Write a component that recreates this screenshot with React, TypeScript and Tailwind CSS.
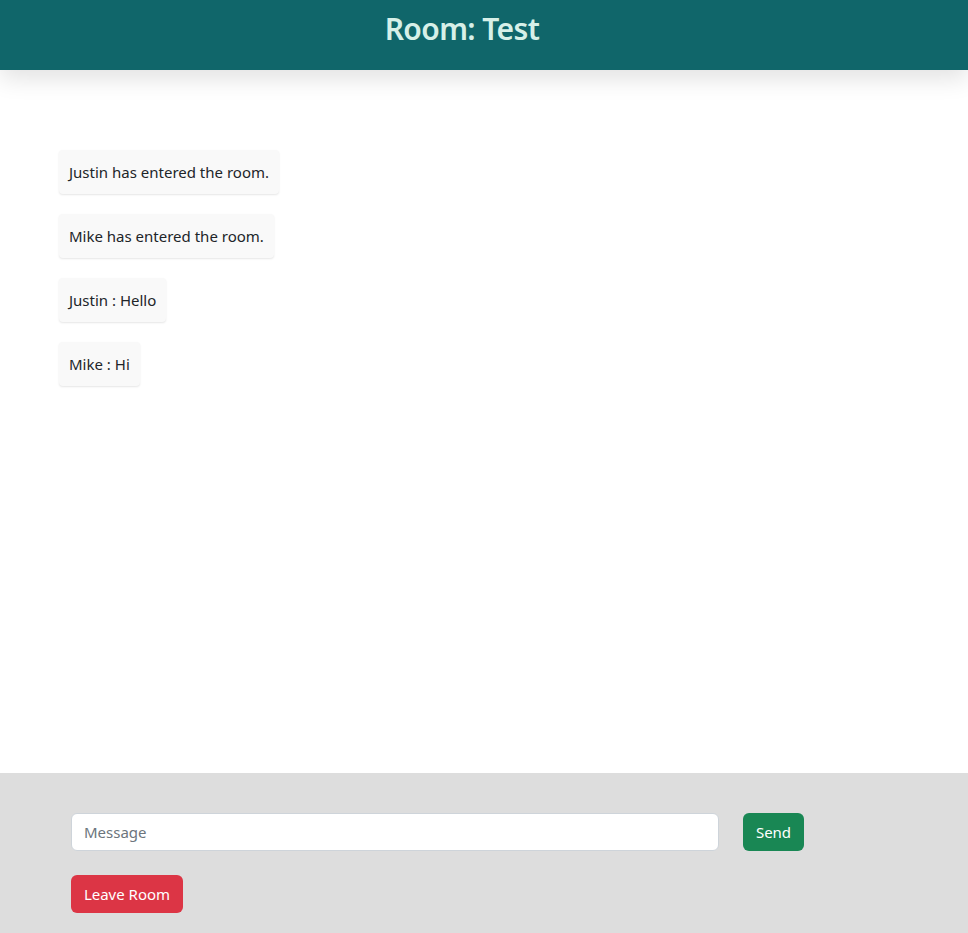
import { useState } from 'react';

export default function App() {
  const [draft, setDraft] = useState('');

  const messages = [
    'Justin has entered the room.',
    'Mike has entered the room.',
    'Justin : Hello',
    'Mike : Hi',
  ];

  return (
    <div className="flex flex-col h-[933px] bg-white text-[#212529]" style={{ fontFamily: '"Noto Sans", "Open Sans", sans-serif' }}>
      {/* Header */}
      <header className="relative z-10 h-[70px] shrink-0 bg-[#10666a] flex items-center justify-center pr-[44px] shadow-[0_8px_24px_rgba(0,0,0,0.12)]">
        <h1 className="text-[30px] font-semibold text-[#d7f0e8] leading-none -mt-[12px] tracking-[-0.6px]">Room: Test</h1>
      </header>

      {/* Message list */}
      <main className="flex-1 pt-[80px] pl-[59px] flex flex-col items-start gap-5">
        {messages.map((msg, idx) => (
          <div key={idx} className="h-[44px] flex items-center px-[10px] bg-[#f9f9f9] rounded-[4px] shadow-[0_1px_2px_rgba(0,0,0,0.1)] text-[15px]">
            {msg}
          </div>
        ))}
      </main>

      {/* Input footer */}
      <footer className="h-[160px] shrink-0 bg-[#dddddd] pt-[40px] pl-[71px]">
        <div className="flex items-center gap-6">
          <input
            value={draft}
            onChange={(e) => setDraft(e.target.value)}
            placeholder="Message"
            className="w-[648px] h-[38px] px-3 bg-white border border-[#ced4da] rounded-[6px] text-[15px] placeholder:text-[#6c757d] outline-none"
          />
          <button className="h-[38px] w-[61px] rounded-[6px] bg-[#198754] text-white text-[15px]">Send</button>
        </div>
        <button className="mt-6 h-[38px] w-[112px] rounded-[6px] bg-[#dc3545] text-white text-[15px]">Leave Room</button>
      </footer>
    </div>
  );
}
